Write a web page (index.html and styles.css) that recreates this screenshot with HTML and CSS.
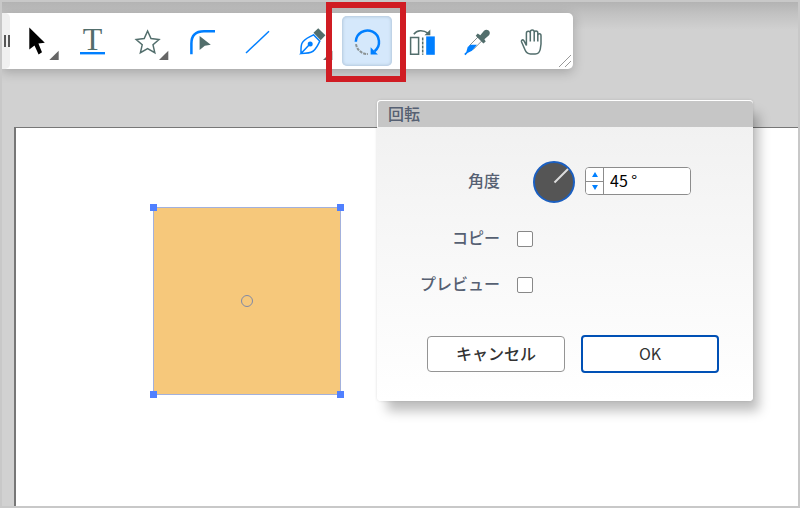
FILE: index.html
```html
<!DOCTYPE html>
<html lang="ja">

<head>
    <meta charset="UTF-8">
    <meta name="viewport" content="width=device-width, initial-scale=1.0">
    <title>回転</title>
    <link rel="stylesheet" href="styles.css">
</head>

<body>
    <main class="workspace">
        <div class="toolbar" role="toolbar" aria-label="ツール">
            <div class="grip"><i></i><i></i></div>
            <button type="button" class="tool" aria-label="選択">
                <svg viewBox="0 0 50 50">
                    <path class="black" d="M17.3 11.5 32.8 26.8 26.4 27.6 30 36.3 26.6 38.4 22.5 29.4 17.3 33.5Z" />
                    <path class="more" d="M46.7 34.7V44H37.3Z" />
                </svg>
            </button>
            <button type="button" class="tool" aria-label="テキスト">
                <svg viewBox="0 0 50 50">
                    <text class="letter" x="25.500" y="34" text-anchor="middle">T</text>
                    <path class="blue" d="M13 36h25v2.400H13Z" />
                </svg>
            </button>
            <button type="button" class="tool" aria-label="スター">
                <svg viewBox="0 0 50 50">
                    <path class="line-gray" d="M25.600 15 29 22.600 37 23.500 31 28.800 32.800 36.700 25.600 32.700 18.400 36.700 20.200 28.800 14.200 23.500 22.200 22.600Z" />
                    <path class="more" d="M46.3 34.7V44H37Z" />
                </svg>
            </button>
            <button type="button" class="tool" aria-label="ライブコーナー">
                <svg viewBox="0 0 50 50">
                    <path class="line-blue thick" d="M14.400 38.300V27.500Q14.400 15.200 27 15.200H38" />
                    <path class="gray" d="M22.600 20 33.800 28.800 27.800 29.800 22.600 34Z" />
                </svg>
            </button>
            <button type="button" class="tool" aria-label="直線">
                <svg viewBox="0 0 50 50">
                    <path class="line-blue" d="M14 37 37 15.200" />
                </svg>
            </button>
            <button type="button" class="tool" aria-label="ペン">
                <svg viewBox="0 0 50 50">
                    <path class="line-blue" d="M14 37.500C14 33 13.700 30 15 27.200C17 23 22 21.500 26.500 18.800L32.800 25.200C30.500 29.500 29 34.500 24 36.300C21 37.500 18 37 14 37.500L22.500 28.500" />
                    <circle class="blue" cx="23.200" cy="28" r="2.500" />
                    <path class="gray" d="M31.200 12.300 38.400 19.200 33.700 24.200 26.500 16.800Z" />
                    <path class="more" d="M45.400 34.700V44H36Z" />
                </svg>
            </button>
            <button type="button" class="tool active" aria-label="回転" aria-pressed="true">
                <svg viewBox="0 0 50 50">
                    <path class="line-blue thick" d="M13.800 25.800A11.600 11.600 0 1 1 32.600 35.200" />
                    <path class="line-ash" d="M14 28.200A11.600 11.600 0 0 0 26 38" />
                    <path class="blue" d="M28.600 31.200V38.500H35.900Z" />
                </svg>
                <span class="highlight"></span>
            </button>
            <button type="button" class="tool" aria-label="リフレクト">
                <svg viewBox="0 0 50 50">
                    <path class="line-gray" d="M13.600 21.600h8v16.600h-8Z" />
                    <path class="line-gray dashed" d="M25.700 21.500V38.800" />
                    <path class="blue" d="M29.200 20.400h8.600v18.400h-8.600Z" />
                    <path class="line-gray" d="M16.800 18.200C20 14 26 13.700 31 17.200" />
                    <path class="gray" d="M33.300 13.500V19.200H27.500Z" />
                </svg>
            </button>
            <button type="button" class="tool" aria-label="スポイト">
                <svg viewBox="0 0 50 50">
                    <path class="line-ash thin" d="M17.500 29.500 26.300 20.700 30.200 24.500 21.500 33.200Z" />
                    <path class="blue" d="M12.200 38 14.300 36 15.700 31 18.500 28.700H25L20 34.700 15.500 36.900 13.500 39.300Z" />
                    <path class="gray" d="M23.700 19.700 25.700 17.600 28.300 19.200 32 14.800C35 11.800 39.800 15.700 37 19.200L32.400 23.200 33.700 25.500 31.400 27.600Z" />
                </svg>
            </button>
            <button type="button" class="tool" aria-label="手のひら">
                <svg viewBox="0 0 50 50">
                    <path class="line-gray" d="M19.400 29.500 17.200 25.200C16.200 23 13.800 23.800 14.600 26L18.200 34.300C19.200 36.800 20.700 37.900 23.500 37.900H28.300C31.500 37.900 32.800 36 33.300 33L34 28V19.800C34 17.200 30.800 17.200 30.800 19.800V25.500V17C30.800 14.200 27.200 14.200 27.200 17V25.500V15.900C27.200 13.300 23.300 13.300 23.300 15.900V25.500V17.300C23.300 14.700 19.400 14.700 19.400 17.300Z" />
                </svg>
            </button>
            <svg class="resize" viewBox="0 0 14 14">
                <path d="M1 13 13 1M7 13 13 7" />
            </svg>
        </div>

        <section class="artboard">
            <div class="shape">
                <span class="handle top left"></span>
                <span class="handle top right"></span>
                <span class="handle bottom left"></span>
                <span class="handle bottom right"></span>
                <span class="center"></span>
            </div>
        </section>

        <form class="dialog" role="dialog" aria-labelledby="dialogTitle">
            <h1 class="title" id="dialogTitle">回転</h1>
            <div class="row angle">
                <label for="angle">角度</label>
                <svg class="dial" viewBox="0 0 42 42">
                    <circle cx="21" cy="21" r="20" />
                    <path d="M21.500 21.500 35 8" />
                </svg>
                <div class="stepper">
                    <div class="arrows">
                        <button type="button" aria-label="増やす"><svg viewBox="0 0 6 6"><path d="M0 6 3 1 6 6Z" /></svg></button>
                        <button type="button" aria-label="減らす"><svg viewBox="0 0 6 6"><path d="M0 0H6L3 5Z" /></svg></button>
                    </div>
                    <input type="text" id="angle" value="45 °">
                </div>
            </div>
            <div class="row">
                <label for="copy">コピー</label>
                <input type="checkbox" id="copy">
            </div>
            <div class="row">
                <label for="preview">プレビュー</label>
                <input type="checkbox" id="preview">
            </div>
            <div class="actions">
                <button type="button" class="cancel">キャンセル</button>
                <button type="button" class="ok">OK</button>
            </div>
        </form>
    </main>
</body>

</html>
```
FILE: styles.css
```css
* {
    box-sizing: border-box;
}
body {
    margin: 0;
    font-family: "Noto Sans CJK JP", sans-serif;
    font-size: 16px;
    font-weight: 500;
    color: #566072;
}
button, input {
    font: inherit;
    margin: 0;
    padding: 0;
}
.workspace {
    position: relative;
    display: flex;
    flex-direction: column;
    align-items: flex-start;
    min-height: 100vh;
    padding-top: 11px;
    border: 2px solid #c8c8c8;
    background: linear-gradient(#b3b3b3, #c2c2c2 12px, #d1d1d1 28px);
    overflow: hidden;
}

/* toolbar */
.toolbar {
    position: relative;
    z-index: 1;
    display: flex;
    gap: 5px;
    padding: 3px 16px 3px 0;
    background: #fff;
    border-radius: 0 5px 5px 0;
    box-shadow: 0 3px 12px rgba(0, 0, 0, 0.22);
}
.grip {
    display: flex;
    align-items: center;
    gap: 2px;
    width: 8px;
    margin: -3px -3px -3px 0;
    padding-left: 2px;
    background: #f0f0f0;
    border-radius: 0 5px 5px 0;
}
.grip i {
    width: 2px;
    height: 12px;
    background: #555;
}
.tool {
    position: relative;
    width: 50px;
    height: 50px;
    border: none;
    border-radius: 5px;
    background: none;
}
.tool svg {
    display: block;
    width: 50px;
    height: 50px;
}
.tool.active {
    z-index: 1;
    background: #d5e8fb;
    box-shadow: inset 0 0 3px 1px #b4c8dc;
}
.highlight {
    position: absolute;
    inset: -14px -14px -16px -16px;
    border: 6px solid #d01c23;
}
.resize {
    position: absolute;
    right: 1px;
    bottom: 1px;
    width: 14px;
    height: 14px;
    stroke: #999;
}
.black {
    fill: #000;
}
.blue {
    fill: #007fff;
}
.gray, .letter {
    fill: #526e6c;
}
.more {
    fill: #666;
}
.letter {
    font-family: "Liberation Serif", serif;
    font-size: 32px;
    font-weight: 400;
}
.line-blue, .line-gray, .line-ash {
    fill: none;
    stroke: #007fff;
    stroke-width: 1.5;
}
.line-gray {
    stroke: #526e6c;
}
.line-ash {
    stroke: #8b9293;
    stroke-width: 2;
    stroke-dasharray: 3 1;
}
.thin {
    stroke-width: 1;
    stroke-dasharray: none;
}
.thick {
    stroke-width: 2.5;
}
.dashed {
    stroke-dasharray: 3 1;
}

/* canvas */
.artboard {
    position: relative;
    flex: 1;
    align-self: stretch;
    margin: 58px 0 0 12px;
    border: solid #777;
    border-width: 1px 0 0 2px;
    background: #fff;
}
.shape {
    position: absolute;
    left: 137px;
    top: 79px;
    width: 188px;
    height: 188px;
    border: 1px solid #a3b1dc;
    background: #f6c87b;
}
.handle {
    position: absolute;
    width: 7px;
    height: 7px;
    background: #5080ff;
}
.top {
    top: -4px;
}
.bottom {
    bottom: -4px;
}
.left {
    left: -4px;
}
.right {
    right: -4px;
}
.center {
    position: absolute;
    inset: 0;
    width: 12px;
    height: 12px;
    margin: auto;
    border: 1px solid #8089a5;
    border-radius: 50%;
}

/* rotate dialog */
.dialog {
    position: absolute;
    left: 375px;
    top: 98px;
    width: 376px;
    padding-bottom: 28px;
    border-radius: 4px;
    background: linear-gradient(#f0f0f0, #fff);
    box-shadow: 8px 12px 12px -2px rgba(0, 0, 0, 0.26), 0 0 3px rgba(0, 0, 0, 0.12);
}
.title {
    height: 27px;
    margin: 0 0 34px;
    padding-left: 10px;
    border: solid #fff;
    border-width: 1px 0 0 1px;
    border-radius: 4px 4px 0 0;
    background: #c6c6c6;
    font-size: 16px;
    font-weight: 500;
    line-height: 24px;
}
.row {
    display: flex;
    align-items: center;
    gap: 17px;
    height: 46px;
}
.row label {
    width: 123px;
    padding-bottom: 4px;
    line-height: 24px;
    text-align: right;
}
.angle {
    gap: 10px;
    height: 42px;
    margin-bottom: 13px;
}
.dial {
    width: 42px;
    height: 42px;
    margin-left: 23px;
}
.dial circle {
    fill: #555;
    stroke: #1b5fc0;
    stroke-width: 2;
}
.dial path {
    stroke: #ddd;
    stroke-width: 2;
}
.stepper {
    display: flex;
    width: 106px;
    height: 28px;
    margin-bottom: 2px;
    border: 1px solid #8c8c8c;
    border-radius: 4px;
    background: #fff;
    overflow: hidden;
}
.arrows {
    display: flex;
    flex-direction: column;
    width: 18px;
    border-right: 1px solid #8c8c8c;
}
.arrows button {
    display: flex;
    flex: 1;
    align-items: center;
    justify-content: center;
    border: none;
    background: #fff;
}
.arrows button + button {
    border-top: 1px solid #8c8c8c;
}
.arrows svg {
    width: 6px;
    height: 6px;
    fill: #0080ff;
}
.stepper input {
    flex: 1;
    min-width: 0;
    padding: 0 0 2px 6px;
    border: none;
    color: #000;
    font-weight: 400;
}
input[type="checkbox"] {
    appearance: none;
    width: 16px;
    height: 16px;
    border: 1px solid #888;
    border-radius: 2px;
    background: #fff;
}
.actions {
    display: grid;
    grid-template-columns: 1fr 1fr;
    align-items: center;
    gap: 16px;
    margin-top: 27px;
    padding: 0 34px 0 50px;
}
.actions button {
    height: 36px;
    padding-bottom: 3px;
    border: 1px solid #949494;
    border-radius: 4px;
    background: #fff;
    color: #333;
}
.actions .ok {
    height: 38px;
    border: 2px solid #0050b5;
    font-weight: 400;
}
```
